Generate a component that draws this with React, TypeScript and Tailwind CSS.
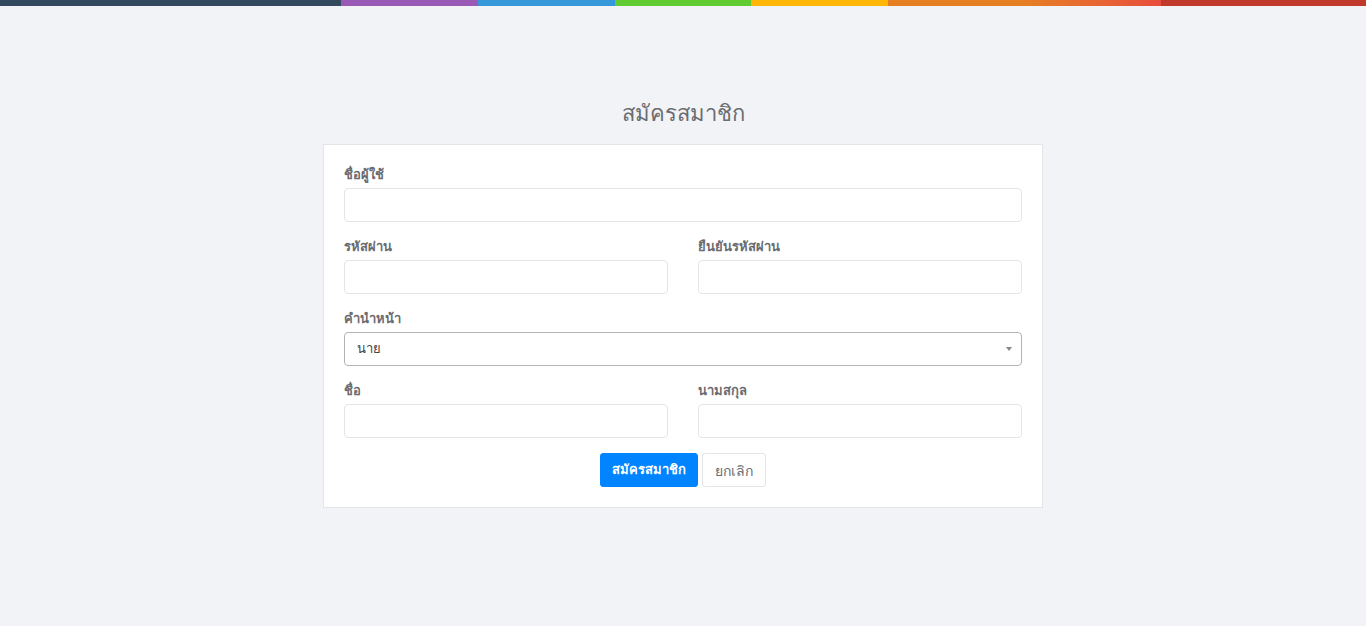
import React from "react";

const Field = ({ label }: { label: string }) => (
  <div className="mb-[15px]">
    <label className="mb-[5px] block h-[18px] text-[13px] font-bold leading-[18px] text-[#6a6c6f]">
      {label}
    </label>
    <input
      type="text"
      className="block h-[34px] w-full rounded-[4px] border border-[#e4e5e7] bg-white px-3 text-[13px] outline-none"
    />
  </div>
);

export default function App() {
  return (
    <div
      className="min-h-[626px] bg-[#f1f3f6] text-[#6a6c6f]"
      style={{ fontFamily: '"Open Sans", "Noto Sans", "Liberation Sans", sans-serif' }}
    >
      <div className="flex h-[6px] w-full">
        <div className="w-[341px] bg-[#34495e]" />
        <div className="w-[137px] bg-[#9b59b6]" />
        <div className="w-[137px] bg-[#3498db]" />
        <div className="w-[136px] bg-[#62cb31]" />
        <div className="w-[137px] bg-[#ffb606]" />
        <div className="w-[273px] bg-gradient-to-r from-[#e67e22] from-50% to-[#e74c3c]" />
        <div className="flex-1 bg-[#c0392b]" />
      </div>

      <div className="mx-auto w-[720px] pt-[89px]">
        <h3 className="mb-[15px] h-[34px] text-center text-[22px] leading-[34px] text-[#6a6c6f]">
          สมัครสมาชิก
        </h3>

        <div className="border border-[#e4e5e7] bg-white p-5">
          <Field label="ชื่อผู้ใช้" />

          <div className="grid grid-cols-2 gap-x-[30px]">
            <Field label="รหัสผ่าน" />
            <Field label="ยืนยันรหัสผ่าน" />
          </div>

          <div className="mb-[15px]">
            <label className="mb-[5px] block h-[18px] text-[13px] font-bold leading-[18px] text-[#6a6c6f]">
              คำนำหน้า
            </label>
            <div className="relative flex h-[34px] w-full items-center rounded-[4px] border border-[#b4b4b4] bg-white pl-3 text-[13px] text-[#444]">
              นาย
              <span className="absolute right-[9px] top-[14px] h-0 w-0 border-x-[3px] border-t-[4px] border-x-transparent border-t-[#888]" />
            </div>
          </div>

          <div className="grid grid-cols-2 gap-x-[30px]">
            <Field label="ชื่อ" />
            <Field label="นามสกุล" />
          </div>

          <div className="flex justify-center gap-1">
            <button className="h-[34px] w-[98px] rounded-[3px] border border-[#0084ff] bg-[#0084ff] text-[13px] font-semibold text-white">
              สมัครสมาชิก
            </button>
            <button className="h-[34px] w-[64px] rounded-[3px] border border-[#e4e5e7] bg-white text-[14px] text-[#6a6c6f]">
              ยกเลิก
            </button>
          </div>
        </div>
      </div>
    </div>
  );
}
